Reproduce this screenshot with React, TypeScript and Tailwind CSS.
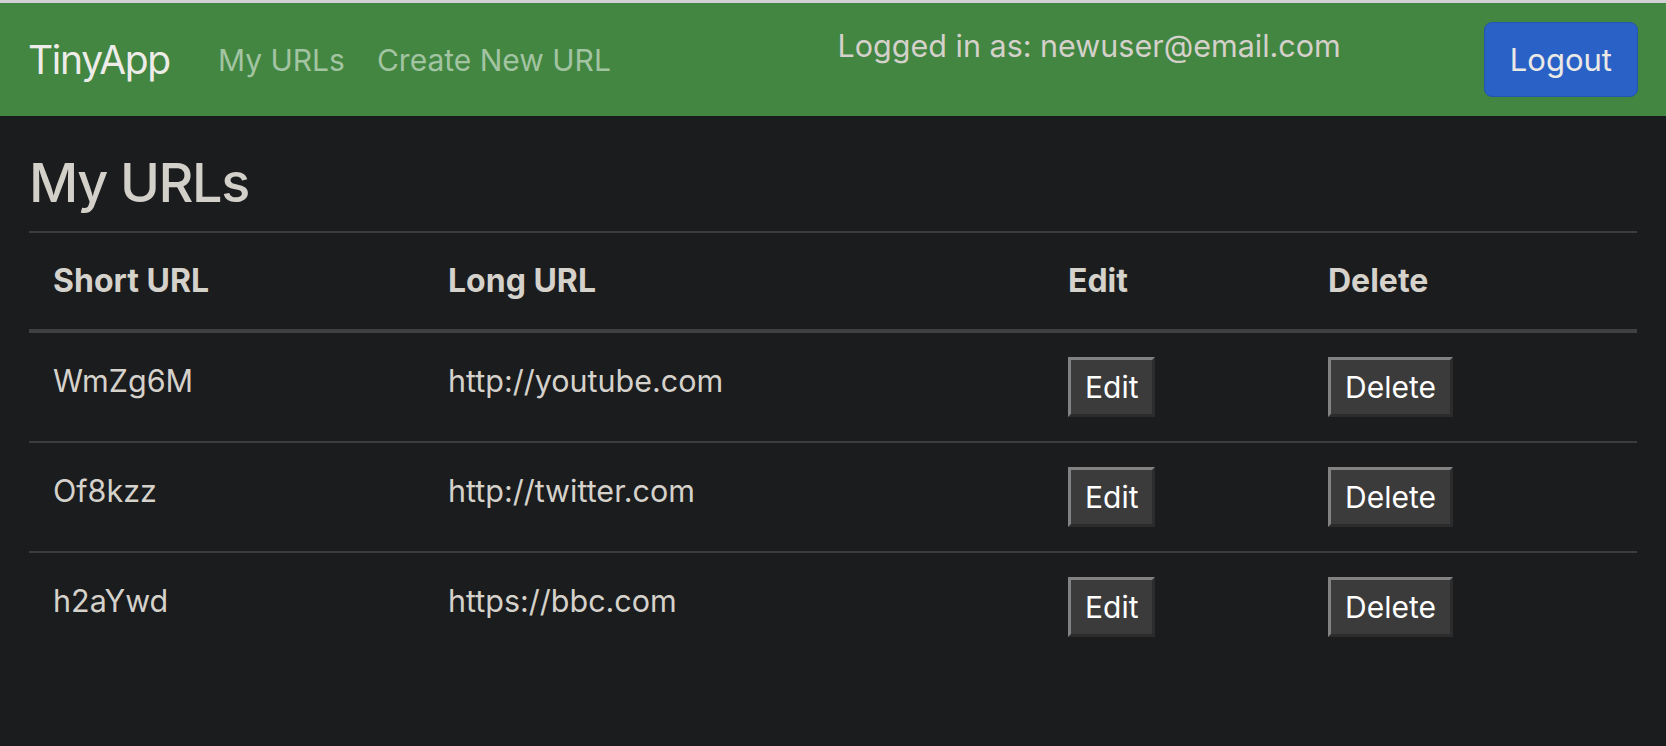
import React from 'react';

type Row = { id: string; longUrl: string };

const urls: Row[] = [
  { id: 'WmZg6M', longUrl: 'http://youtube.com' },
  { id: 'Of8kzz', longUrl: 'http://twitter.com' },
  { id: 'h2aYwd', longUrl: 'https://bbc.com' },
];

const cols = 'grid grid-cols-[395px_620px_260px_1fr]';

function OldButton({ label }: { label: string }) {
  return (
    <button className="h-[60px] px-[14px] py-[9px] text-[30px] leading-[36px] text-white bg-[#3b3b3b] border-[3px] border-t-[#828282] border-l-[#828282] border-r-[#2c2c2c] border-b-[#2c2c2c]">
      {label}
    </button>
  );
}

function Navbar() {
  return (
    <nav className="flex items-center bg-[#428641] pl-[28px] pr-[28px] py-[19px] border-t-[3px] border-[#d2d2d2]">
      <a className="text-[39px] leading-[60px] tracking-[-1.3px] text-[#eeece9]">TinyApp</a>
      <a className="ml-[48px] text-[30px] leading-[48px] text-[#a3c4a2]">My URLs</a>
      <a className="ml-[32px] text-[30px] leading-[48px] text-[#a3c4a2]">Create New URL</a>
      <div className="flex-1" />
      {/* sits at the top of the bar, not centred */}
      <span className="self-start text-[30.5px] leading-[48px] text-[#d4d0ca]">
        Logged in as: newuser@email.com
      </span>
      <button className="ml-[143px] h-[75px] px-[25px] py-[12px] text-[31px] leading-[48px] text-[#ebe9e6] bg-[#2a61c6] border border-[#2455b0] rounded-[8px]">
        Logout
      </button>
    </nav>
  );
}

export default function App() {
  return (
    <div
      className="min-h-[746px] bg-[#1b1c1e] text-[#d5d1cb]"
      style={{ fontFamily: 'Inter, "Noto Sans", sans-serif' }}
    >
      <Navbar />

      <main className="px-[29px]">
        <h1 className="mt-[33px] mb-[15px] text-[54px] leading-[67px] tracking-[-1.4px] font-medium text-[#d3cfc9]">
          My URLs
        </h1>

        <div className={`${cols} border-t-2 border-b-4 border-t-[#3b3c3e] border-b-[#3f4042] font-bold text-[32px] leading-[48px]`}>
          <div className="p-[24px]">Short URL</div>
          <div className="p-[24px]">Long URL</div>
          <div className="p-[24px]">Edit</div>
          <div className="p-[24px]">Delete</div>
        </div>

        {urls.map((row, i) => (
          <div
            key={row.id}
            className={`${cols} text-[30.5px] leading-[48px] ${i > 0 ? 'border-t-2 border-[#3b3c3e]' : ''}`}
          >
            <div className="p-[24px]">{row.id}</div>
            <div className="p-[24px]">{row.longUrl}</div>
            <div className="p-[24px]">
              <OldButton label="Edit" />
            </div>
            <div className="p-[24px]">
              <OldButton label="Delete" />
            </div>
          </div>
        ))}
      </main>
    </div>
  );
}
